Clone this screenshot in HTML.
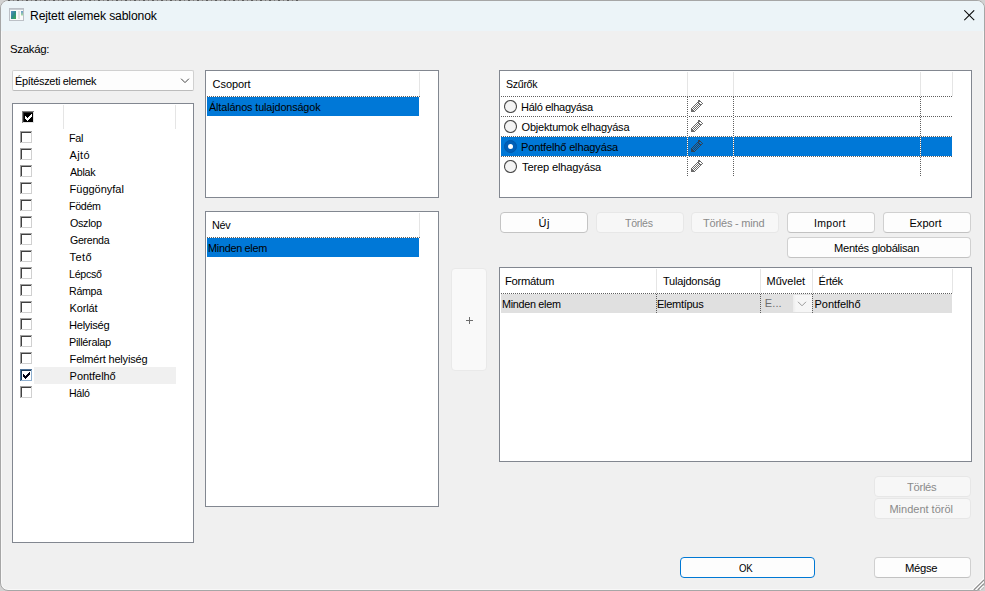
<!DOCTYPE html>
<html>
<head>
<meta charset="utf-8">
<title>Rejtett elemek sablonok</title>
<style>
html,body{margin:0;padding:0;}
body{width:985px;height:591px;overflow:hidden;background:#d2d2d2;font-family:"Liberation Sans",sans-serif;font-size:11px;color:#000;position:relative;}
*{box-sizing:border-box;}
.abs{position:absolute;}
#win{position:absolute;left:0;top:0;width:985px;height:591px;background:#f0f0f0;border:1px solid #a6a6a6;border-radius:8px;overflow:hidden;box-shadow:inset 0 0 0 1px rgba(255,255,255,0.55);}
#tbar{position:absolute;left:0;top:0;width:983px;height:30px;background:#ecf4f8;}
.t{position:absolute;white-space:nowrap;line-height:14px;height:14px;transform-origin:0 0;}
.lb{position:absolute;background:#fff;border:1px solid #828790;}
.btn{position:absolute;background:#fdfdfd;border:1px solid #d0d0d0;border-bottom-color:#c2c2c2;border-radius:4px;}
.btn.dis{background:#f7f7f7;border-color:#e7e7e7;}
.cb{position:absolute;left:20px;width:13px;height:13px;background:#fff;border-top:1px solid #8a8a8a;border-left:1px solid #8a8a8a;border-right:1px solid #e3e3e3;border-bottom:1px solid #e3e3e3;}
.cb i{position:absolute;left:0;top:0;width:11px;height:11px;border-top:1px solid #4a4a4a;border-left:1px solid #4a4a4a;border-right:1px solid #f4f4f4;border-bottom:1px solid #f4f4f4;}
.hs{position:absolute;width:1px;background:#e5e5e5;}
.dv{position:absolute;width:1px;background:#fff linear-gradient(to bottom,#5f5f5f 50%,rgba(255,255,255,0) 50%) 0 0/1px 2px repeat-y;}
.dh{position:absolute;height:1px;background:#fff linear-gradient(to right,#5f5f5f 50%,rgba(255,255,255,0) 50%) 0 0/2px 1px repeat-x;}
</style>
</head>
<body>
<div id="win">
<div id="tbar"></div>
</div>

<div class="abs" style="left:8px;top:0;width:292px;height:1px;background:repeating-linear-gradient(to right,#5a5a5a 0 2px,rgba(0,0,0,0) 2px 5px,#777 5px 6px,rgba(0,0,0,0) 6px 9px);"></div>
<!-- title icon -->
<svg class="abs" style="left:9px;top:8px" width="15" height="13" viewBox="0 0 15 13">
<defs><linearGradient id="g1" x1="0" y1="0" x2="1" y2="1"><stop offset="0" stop-color="#5b8ec8"/><stop offset="0.5" stop-color="#2f8b8b"/><stop offset="1" stop-color="#41ab4c"/></linearGradient>
<linearGradient id="g2" x1="0" y1="0" x2="0" y2="1"><stop offset="0" stop-color="#6a98cc"/><stop offset="1" stop-color="#a4dfa0"/></linearGradient></defs>
<rect x="0.5" y="0.5" width="14" height="12" fill="#fafafa" stroke="#bcc0c6"/>
<rect x="1" y="1" width="13" height="1" fill="#c9cdd2"/>
<rect x="2" y="3" width="5" height="8" fill="url(#g1)"/>
<rect x="9" y="3" width="2" height="8" fill="#e3e3e3"/>
<rect x="12" y="3" width="2" height="4.5" fill="url(#g2)"/>
</svg>
<!-- close X -->
<svg class="abs" style="left:964px;top:10px" width="11" height="11" viewBox="0 0 11 11"><path d="M0.3 0.3 L10.2 10.2 M10.2 0.3 L0.3 10.2" stroke="#0a0a0a" stroke-width="1.05" fill="none"/></svg>

<!-- combo -->
<div class="abs" style="left:12px;top:70px;width:182px;height:21px;background:#fdfdfd;border:1px solid #d0d0d0;border-bottom-color:#bcbcbc;border-radius:2px;"></div>
<svg class="abs" style="left:180px;top:77px" width="10" height="7" viewBox="0 0 10 7"><path d="M1.1 1.7 L5 5.6 L8.9 1.7" stroke="#444" stroke-width="1" fill="none"/></svg>

<!-- left list -->
<div class="lb" style="left:12px;top:103px;width:182px;height:440px;"></div>
<div class="hs" style="left:63px;top:105px;height:24px;"></div>
<div class="hs" style="left:175px;top:105px;height:24px;"></div>
<div class="abs" style="left:34px;top:367px;width:142px;height:17px;background:#f0f0f0;"></div>

<!-- Csoport -->
<div class="lb" style="left:205px;top:70px;width:234px;height:128px;"></div>
<div class="hs" style="left:419px;top:72px;height:24px;"></div>
<div class="dh" style="left:207px;top:96px;width:213px;"></div>
<div class="abs" style="left:207px;top:97px;width:212px;height:19px;background:#0078d7;"></div>

<!-- Nev -->
<div class="lb" style="left:205px;top:211px;width:234px;height:296px;"></div>
<div class="hs" style="left:419px;top:213px;height:24px;"></div>
<div class="dh" style="left:207px;top:237px;width:213px;"></div>
<div class="abs" style="left:207px;top:238px;width:212px;height:19px;background:#0078d7;"></div>

<!-- plus -->
<div class="abs" style="left:451px;top:268px;width:36px;height:103px;background:#f9f9f9;border:1px solid #e9e9e9;border-radius:4px;"></div>
<svg class="abs" style="left:466px;top:317px" width="7" height="7" viewBox="0 0 7 7"><path d="M3.5 0 V7 M0 3.5 H7" stroke="#6e6e6e" stroke-width="1" fill="none"/></svg>

<!-- filters list -->
<div class="lb" style="left:499px;top:70px;width:473px;height:128px;"></div>
<div class="abs" style="left:501px;top:137px;width:451px;height:19px;background:#0078d7;"></div>
<div class="hs" style="left:687px;top:72px;height:24px;"></div>
<div class="hs" style="left:733px;top:72px;height:24px;"></div>
<div class="hs" style="left:920px;top:72px;height:24px;"></div>
<div class="hs" style="left:952px;top:72px;height:24px;"></div>
<div class="dh" style="left:501px;top:96px;width:451px;"></div>
<div class="dh" style="left:501px;top:116px;width:451px;"></div>
<div class="dh" style="left:501px;top:136px;width:451px;"></div>
<div class="dh" style="left:501px;top:156px;width:451px;"></div>
<div class="dv" style="left:687px;top:97px;height:79px;"></div>
<div class="dv" style="left:733px;top:97px;height:79px;"></div>
<div class="dv" style="left:920px;top:97px;height:79px;"></div>

<!-- buttons -->
<div class="btn" style="left:500px;top:212px;width:88px;height:21px;border-color:#c4c4c4;"></div>
<div class="btn dis" style="left:596px;top:212px;width:88px;height:21px;"></div>
<div class="btn dis" style="left:691px;top:212px;width:88px;height:21px;"></div>
<div class="btn" style="left:787px;top:212px;width:88px;height:21px;"></div>
<div class="btn" style="left:883px;top:212px;width:88px;height:21px;"></div>
<div class="btn" style="left:787px;top:237px;width:184px;height:21px;"></div>

<!-- bottom table -->
<div class="lb" style="left:499px;top:267px;width:473px;height:195px;"></div>
<div class="abs" style="left:501px;top:294px;width:451px;height:19px;background:#e0e0e0;"></div>
<div class="abs" style="left:793px;top:295px;width:19px;height:17px;background:linear-gradient(to right,#ececec,#f6f6f6 3px);"></div>
<div class="hs" style="left:656px;top:269px;height:24px;"></div>
<div class="hs" style="left:760px;top:269px;height:24px;"></div>
<div class="hs" style="left:812px;top:269px;height:24px;"></div>
<div class="hs" style="left:952px;top:269px;height:24px;"></div>
<div class="dh" style="left:501px;top:293px;width:451px;"></div>
<div class="dv" style="left:656px;top:294px;height:19px;background-color:transparent;"></div>
<div class="dv" style="left:760px;top:294px;height:19px;background-color:transparent;"></div>
<div class="dv" style="left:812px;top:294px;height:19px;background-color:transparent;"></div>
<svg class="abs" style="left:797px;top:301px" width="10" height="6" viewBox="0 0 10 6"><path d="M1 0.8 L5 4.8 L9 0.8" stroke="#9a9a9a" stroke-width="1" fill="none"/></svg>

<div class="btn dis" style="left:874px;top:476px;width:97px;height:21px;"></div>
<div class="btn dis" style="left:874px;top:498px;width:97px;height:21px;"></div>
<div class="btn" style="left:680px;top:557px;width:135px;height:21px;border-color:#0078d4;"></div>
<div class="btn" style="left:874px;top:557px;width:97px;height:21px;"></div>

<!-- resize grip -->
<svg class="abs" style="left:970px;top:576px" width="14" height="14" viewBox="0 0 14 14">
<path d="M2.3 14 L14 2.3 M6 14 L14 6 M9.9 14 L14 9.9" stroke="#ffffff" stroke-width="1.2" fill="none"/>
<path d="M3.8 14 L14 3.8 M7.7 14 L14 7.7" stroke="#8e8e8e" stroke-width="1.2" fill="none"/>
<path d="M11.2 14 L14 11.2" stroke="#c0c0c0" stroke-width="1.2" fill="none"/>
</svg>

<svg class="abs" style="left:22px;top:111px" width="13" height="13" viewBox="0 0 13 13" shape-rendering="crispEdges"><rect x="0" y="0" width="13" height="13" fill="#ffffff"/><rect x="0" y="0" width="12" height="12" fill="#808080"/><rect x="1" y="1" width="11" height="11" fill="#e3e3e3"/><rect x="1" y="1" width="10" height="10" fill="#2a2a2a"/><rect x="2" y="2" width="9" height="9" fill="#000000"/><rect x="3" y="5" width="1" height="3" fill="#ffffff"/><rect x="4" y="6" width="1" height="3" fill="#ffffff"/><rect x="5" y="7" width="1" height="3" fill="#ffffff"/><rect x="6" y="6" width="1" height="3" fill="#ffffff"/><rect x="7" y="5" width="1" height="3" fill="#ffffff"/><rect x="8" y="4" width="1" height="3" fill="#ffffff"/><rect x="9" y="3" width="1" height="3" fill="#ffffff"/></svg>
<svg class="abs" style="left:20px;top:131px" width="13" height="13" viewBox="0 0 13 13" shape-rendering="crispEdges"><rect x="0" y="0" width="13" height="13" fill="#ffffff"/><rect x="0" y="0" width="12" height="12" fill="#a0a0a0"/><rect x="1" y="1" width="11" height="11" fill="#d0d0d0"/><rect x="1" y="1" width="10" height="10" fill="#404040"/><rect x="2" y="2" width="9" height="9" fill="#ffffff"/></svg>
<svg class="abs" style="left:20px;top:148px" width="13" height="13" viewBox="0 0 13 13" shape-rendering="crispEdges"><rect x="0" y="0" width="13" height="13" fill="#ffffff"/><rect x="0" y="0" width="12" height="12" fill="#a0a0a0"/><rect x="1" y="1" width="11" height="11" fill="#d0d0d0"/><rect x="1" y="1" width="10" height="10" fill="#404040"/><rect x="2" y="2" width="9" height="9" fill="#ffffff"/></svg>
<svg class="abs" style="left:20px;top:165px" width="13" height="13" viewBox="0 0 13 13" shape-rendering="crispEdges"><rect x="0" y="0" width="13" height="13" fill="#ffffff"/><rect x="0" y="0" width="12" height="12" fill="#a0a0a0"/><rect x="1" y="1" width="11" height="11" fill="#d0d0d0"/><rect x="1" y="1" width="10" height="10" fill="#404040"/><rect x="2" y="2" width="9" height="9" fill="#ffffff"/></svg>
<svg class="abs" style="left:20px;top:182px" width="13" height="13" viewBox="0 0 13 13" shape-rendering="crispEdges"><rect x="0" y="0" width="13" height="13" fill="#ffffff"/><rect x="0" y="0" width="12" height="12" fill="#a0a0a0"/><rect x="1" y="1" width="11" height="11" fill="#d0d0d0"/><rect x="1" y="1" width="10" height="10" fill="#404040"/><rect x="2" y="2" width="9" height="9" fill="#ffffff"/></svg>
<svg class="abs" style="left:20px;top:199px" width="13" height="13" viewBox="0 0 13 13" shape-rendering="crispEdges"><rect x="0" y="0" width="13" height="13" fill="#ffffff"/><rect x="0" y="0" width="12" height="12" fill="#a0a0a0"/><rect x="1" y="1" width="11" height="11" fill="#d0d0d0"/><rect x="1" y="1" width="10" height="10" fill="#404040"/><rect x="2" y="2" width="9" height="9" fill="#ffffff"/></svg>
<svg class="abs" style="left:20px;top:216px" width="13" height="13" viewBox="0 0 13 13" shape-rendering="crispEdges"><rect x="0" y="0" width="13" height="13" fill="#ffffff"/><rect x="0" y="0" width="12" height="12" fill="#a0a0a0"/><rect x="1" y="1" width="11" height="11" fill="#d0d0d0"/><rect x="1" y="1" width="10" height="10" fill="#404040"/><rect x="2" y="2" width="9" height="9" fill="#ffffff"/></svg>
<svg class="abs" style="left:20px;top:233px" width="13" height="13" viewBox="0 0 13 13" shape-rendering="crispEdges"><rect x="0" y="0" width="13" height="13" fill="#ffffff"/><rect x="0" y="0" width="12" height="12" fill="#a0a0a0"/><rect x="1" y="1" width="11" height="11" fill="#d0d0d0"/><rect x="1" y="1" width="10" height="10" fill="#404040"/><rect x="2" y="2" width="9" height="9" fill="#ffffff"/></svg>
<svg class="abs" style="left:20px;top:250px" width="13" height="13" viewBox="0 0 13 13" shape-rendering="crispEdges"><rect x="0" y="0" width="13" height="13" fill="#ffffff"/><rect x="0" y="0" width="12" height="12" fill="#a0a0a0"/><rect x="1" y="1" width="11" height="11" fill="#d0d0d0"/><rect x="1" y="1" width="10" height="10" fill="#404040"/><rect x="2" y="2" width="9" height="9" fill="#ffffff"/></svg>
<svg class="abs" style="left:20px;top:267px" width="13" height="13" viewBox="0 0 13 13" shape-rendering="crispEdges"><rect x="0" y="0" width="13" height="13" fill="#ffffff"/><rect x="0" y="0" width="12" height="12" fill="#a0a0a0"/><rect x="1" y="1" width="11" height="11" fill="#d0d0d0"/><rect x="1" y="1" width="10" height="10" fill="#404040"/><rect x="2" y="2" width="9" height="9" fill="#ffffff"/></svg>
<svg class="abs" style="left:20px;top:284px" width="13" height="13" viewBox="0 0 13 13" shape-rendering="crispEdges"><rect x="0" y="0" width="13" height="13" fill="#ffffff"/><rect x="0" y="0" width="12" height="12" fill="#a0a0a0"/><rect x="1" y="1" width="11" height="11" fill="#d0d0d0"/><rect x="1" y="1" width="10" height="10" fill="#404040"/><rect x="2" y="2" width="9" height="9" fill="#ffffff"/></svg>
<svg class="abs" style="left:20px;top:301px" width="13" height="13" viewBox="0 0 13 13" shape-rendering="crispEdges"><rect x="0" y="0" width="13" height="13" fill="#ffffff"/><rect x="0" y="0" width="12" height="12" fill="#a0a0a0"/><rect x="1" y="1" width="11" height="11" fill="#d0d0d0"/><rect x="1" y="1" width="10" height="10" fill="#404040"/><rect x="2" y="2" width="9" height="9" fill="#ffffff"/></svg>
<svg class="abs" style="left:20px;top:318px" width="13" height="13" viewBox="0 0 13 13" shape-rendering="crispEdges"><rect x="0" y="0" width="13" height="13" fill="#ffffff"/><rect x="0" y="0" width="12" height="12" fill="#a0a0a0"/><rect x="1" y="1" width="11" height="11" fill="#d0d0d0"/><rect x="1" y="1" width="10" height="10" fill="#404040"/><rect x="2" y="2" width="9" height="9" fill="#ffffff"/></svg>
<svg class="abs" style="left:20px;top:335px" width="13" height="13" viewBox="0 0 13 13" shape-rendering="crispEdges"><rect x="0" y="0" width="13" height="13" fill="#ffffff"/><rect x="0" y="0" width="12" height="12" fill="#a0a0a0"/><rect x="1" y="1" width="11" height="11" fill="#d0d0d0"/><rect x="1" y="1" width="10" height="10" fill="#404040"/><rect x="2" y="2" width="9" height="9" fill="#ffffff"/></svg>
<svg class="abs" style="left:20px;top:352px" width="13" height="13" viewBox="0 0 13 13" shape-rendering="crispEdges"><rect x="0" y="0" width="13" height="13" fill="#ffffff"/><rect x="0" y="0" width="12" height="12" fill="#a0a0a0"/><rect x="1" y="1" width="11" height="11" fill="#d0d0d0"/><rect x="1" y="1" width="10" height="10" fill="#404040"/><rect x="2" y="2" width="9" height="9" fill="#ffffff"/></svg>
<svg class="abs" style="left:20px;top:369px" width="13" height="13" viewBox="0 0 13 13" shape-rendering="crispEdges"><rect x="0" y="0" width="13" height="13" fill="#ffffff"/><rect x="0" y="0" width="12" height="12" fill="#4a7097"/><rect x="1" y="1" width="11" height="11" fill="#8fb0d0"/><rect x="1" y="1" width="10" height="10" fill="#1c3a57"/><rect x="2" y="2" width="9" height="9" fill="#ffffff"/><rect x="3" y="5" width="1" height="3" fill="#000010"/><rect x="4" y="6" width="1" height="3" fill="#000010"/><rect x="5" y="7" width="1" height="3" fill="#000010"/><rect x="6" y="6" width="1" height="3" fill="#000010"/><rect x="7" y="5" width="1" height="3" fill="#000010"/><rect x="8" y="4" width="1" height="3" fill="#000010"/><rect x="9" y="3" width="1" height="3" fill="#000010"/></svg>
<svg class="abs" style="left:20px;top:386px" width="13" height="13" viewBox="0 0 13 13" shape-rendering="crispEdges"><rect x="0" y="0" width="13" height="13" fill="#ffffff"/><rect x="0" y="0" width="12" height="12" fill="#a0a0a0"/><rect x="1" y="1" width="11" height="11" fill="#d0d0d0"/><rect x="1" y="1" width="10" height="10" fill="#404040"/><rect x="2" y="2" width="9" height="9" fill="#ffffff"/></svg>
<svg class="abs" style="left:504px;top:100px" width="13" height="13" viewBox="0 0 13 13"><circle cx="6.5" cy="6.5" r="6" fill="#f4f4f4" stroke="#4c4c4c" stroke-width="1.1"/></svg>
<svg class="abs" style="left:691px;top:100px" width="12" height="12" viewBox="0 0 12 12" shape-rendering="crispEdges"><defs><pattern id="pp0" width="2" height="2" patternUnits="userSpaceOnUse"><rect x="0" y="0" width="1" height="1" fill="#6c6c6c"/><rect x="1" y="1" width="1" height="1" fill="#6c6c6c"/></pattern></defs><rect x="7" y="0" width="2" height="1" fill="#ffffff"/><rect x="7" y="0" width="2" height="1" fill="url(#pp0)"/><rect x="6" y="1" width="4" height="1" fill="#ffffff"/><rect x="6" y="1" width="4" height="1" fill="url(#pp0)"/><rect x="5" y="2" width="6" height="1" fill="#ffffff"/><rect x="5" y="2" width="6" height="1" fill="url(#pp0)"/><rect x="4" y="3" width="8" height="1" fill="#ffffff"/><rect x="4" y="3" width="8" height="1" fill="url(#pp0)"/><rect x="3" y="4" width="8" height="1" fill="#ffffff"/><rect x="3" y="4" width="8" height="1" fill="url(#pp0)"/><rect x="2" y="5" width="8" height="1" fill="#ffffff"/><rect x="2" y="5" width="8" height="1" fill="url(#pp0)"/><rect x="1" y="6" width="8" height="1" fill="#ffffff"/><rect x="1" y="6" width="8" height="1" fill="url(#pp0)"/><rect x="0" y="7" width="8" height="1" fill="#ffffff"/><rect x="0" y="7" width="8" height="1" fill="url(#pp0)"/><rect x="0" y="8" width="7" height="1" fill="#ffffff"/><rect x="0" y="8" width="7" height="1" fill="url(#pp0)"/><rect x="0" y="9" width="6" height="1" fill="#ffffff"/><rect x="0" y="9" width="6" height="1" fill="url(#pp0)"/><rect x="0" y="10" width="5" height="1" fill="#ffffff"/><rect x="0" y="10" width="5" height="1" fill="url(#pp0)"/><rect x="0" y="11" width="4" height="1" fill="#ffffff"/><rect x="0" y="11" width="4" height="1" fill="url(#pp0)"/><rect x="7" y="0" width="2" height="1" fill="#6c6c6c"/><rect x="7" y="1" width="3" height="1" fill="#6c6c6c"/><rect x="7" y="2" width="4" height="1" fill="#6c6c6c"/><rect x="8" y="3" width="4" height="1" fill="#6c6c6c"/><rect x="9" y="4" width="2" height="1" fill="#6c6c6c"/><rect x="8" y="2" width="2" height="1" fill="#ffffff"/><rect x="9" y="3" width="2" height="1" fill="#ffffff"/><rect x="0" y="10" width="2" height="2" fill="#6c6c6c"/><rect x="0" y="8" width="1" height="4" fill="#6c6c6c"/><rect x="0" y="11" width="4" height="1" fill="#6c6c6c"/></svg>
<svg class="abs" style="left:504px;top:120px" width="13" height="13" viewBox="0 0 13 13"><circle cx="6.5" cy="6.5" r="6" fill="#f4f4f4" stroke="#4c4c4c" stroke-width="1.1"/></svg>
<svg class="abs" style="left:691px;top:120px" width="12" height="12" viewBox="0 0 12 12" shape-rendering="crispEdges"><defs><pattern id="pp1" width="2" height="2" patternUnits="userSpaceOnUse"><rect x="0" y="0" width="1" height="1" fill="#6c6c6c"/><rect x="1" y="1" width="1" height="1" fill="#6c6c6c"/></pattern></defs><rect x="7" y="0" width="2" height="1" fill="#ffffff"/><rect x="7" y="0" width="2" height="1" fill="url(#pp1)"/><rect x="6" y="1" width="4" height="1" fill="#ffffff"/><rect x="6" y="1" width="4" height="1" fill="url(#pp1)"/><rect x="5" y="2" width="6" height="1" fill="#ffffff"/><rect x="5" y="2" width="6" height="1" fill="url(#pp1)"/><rect x="4" y="3" width="8" height="1" fill="#ffffff"/><rect x="4" y="3" width="8" height="1" fill="url(#pp1)"/><rect x="3" y="4" width="8" height="1" fill="#ffffff"/><rect x="3" y="4" width="8" height="1" fill="url(#pp1)"/><rect x="2" y="5" width="8" height="1" fill="#ffffff"/><rect x="2" y="5" width="8" height="1" fill="url(#pp1)"/><rect x="1" y="6" width="8" height="1" fill="#ffffff"/><rect x="1" y="6" width="8" height="1" fill="url(#pp1)"/><rect x="0" y="7" width="8" height="1" fill="#ffffff"/><rect x="0" y="7" width="8" height="1" fill="url(#pp1)"/><rect x="0" y="8" width="7" height="1" fill="#ffffff"/><rect x="0" y="8" width="7" height="1" fill="url(#pp1)"/><rect x="0" y="9" width="6" height="1" fill="#ffffff"/><rect x="0" y="9" width="6" height="1" fill="url(#pp1)"/><rect x="0" y="10" width="5" height="1" fill="#ffffff"/><rect x="0" y="10" width="5" height="1" fill="url(#pp1)"/><rect x="0" y="11" width="4" height="1" fill="#ffffff"/><rect x="0" y="11" width="4" height="1" fill="url(#pp1)"/><rect x="7" y="0" width="2" height="1" fill="#6c6c6c"/><rect x="7" y="1" width="3" height="1" fill="#6c6c6c"/><rect x="7" y="2" width="4" height="1" fill="#6c6c6c"/><rect x="8" y="3" width="4" height="1" fill="#6c6c6c"/><rect x="9" y="4" width="2" height="1" fill="#6c6c6c"/><rect x="8" y="2" width="2" height="1" fill="#ffffff"/><rect x="9" y="3" width="2" height="1" fill="#ffffff"/><rect x="0" y="10" width="2" height="2" fill="#6c6c6c"/><rect x="0" y="8" width="1" height="4" fill="#6c6c6c"/><rect x="0" y="11" width="4" height="1" fill="#6c6c6c"/></svg>
<svg class="abs" style="left:504px;top:140px" width="13" height="13" viewBox="0 0 13 13"><circle cx="6.5" cy="6.5" r="6" fill="#005fb8" stroke="#0058aa" stroke-width="1"/><circle cx="6.5" cy="6.5" r="2.5" fill="#fff"/></svg>
<svg class="abs" style="left:691px;top:140px" width="12" height="12" viewBox="0 0 12 12" shape-rendering="crispEdges"><defs><pattern id="pp2" width="2" height="2" patternUnits="userSpaceOnUse"><rect x="0" y="0" width="1" height="1" fill="#2e4256"/><rect x="1" y="1" width="1" height="1" fill="#2e4256"/></pattern></defs><rect x="7" y="0" width="2" height="1" fill="#0078d7"/><rect x="7" y="0" width="2" height="1" fill="url(#pp2)"/><rect x="6" y="1" width="4" height="1" fill="#0078d7"/><rect x="6" y="1" width="4" height="1" fill="url(#pp2)"/><rect x="5" y="2" width="6" height="1" fill="#0078d7"/><rect x="5" y="2" width="6" height="1" fill="url(#pp2)"/><rect x="4" y="3" width="8" height="1" fill="#0078d7"/><rect x="4" y="3" width="8" height="1" fill="url(#pp2)"/><rect x="3" y="4" width="8" height="1" fill="#0078d7"/><rect x="3" y="4" width="8" height="1" fill="url(#pp2)"/><rect x="2" y="5" width="8" height="1" fill="#0078d7"/><rect x="2" y="5" width="8" height="1" fill="url(#pp2)"/><rect x="1" y="6" width="8" height="1" fill="#0078d7"/><rect x="1" y="6" width="8" height="1" fill="url(#pp2)"/><rect x="0" y="7" width="8" height="1" fill="#0078d7"/><rect x="0" y="7" width="8" height="1" fill="url(#pp2)"/><rect x="0" y="8" width="7" height="1" fill="#0078d7"/><rect x="0" y="8" width="7" height="1" fill="url(#pp2)"/><rect x="0" y="9" width="6" height="1" fill="#0078d7"/><rect x="0" y="9" width="6" height="1" fill="url(#pp2)"/><rect x="0" y="10" width="5" height="1" fill="#0078d7"/><rect x="0" y="10" width="5" height="1" fill="url(#pp2)"/><rect x="0" y="11" width="4" height="1" fill="#0078d7"/><rect x="0" y="11" width="4" height="1" fill="url(#pp2)"/><rect x="7" y="0" width="2" height="1" fill="#2e4256"/><rect x="7" y="1" width="3" height="1" fill="#2e4256"/><rect x="7" y="2" width="4" height="1" fill="#2e4256"/><rect x="8" y="3" width="4" height="1" fill="#2e4256"/><rect x="9" y="4" width="2" height="1" fill="#2e4256"/><rect x="8" y="2" width="2" height="1" fill="#0078d7"/><rect x="9" y="3" width="2" height="1" fill="#0078d7"/><rect x="0" y="10" width="2" height="2" fill="#2e4256"/><rect x="0" y="8" width="1" height="4" fill="#2e4256"/><rect x="0" y="11" width="4" height="1" fill="#2e4256"/></svg>
<svg class="abs" style="left:504px;top:160px" width="13" height="13" viewBox="0 0 13 13"><circle cx="6.5" cy="6.5" r="6" fill="#f4f4f4" stroke="#4c4c4c" stroke-width="1.1"/></svg>
<svg class="abs" style="left:691px;top:160px" width="12" height="12" viewBox="0 0 12 12" shape-rendering="crispEdges"><defs><pattern id="pp3" width="2" height="2" patternUnits="userSpaceOnUse"><rect x="0" y="0" width="1" height="1" fill="#6c6c6c"/><rect x="1" y="1" width="1" height="1" fill="#6c6c6c"/></pattern></defs><rect x="7" y="0" width="2" height="1" fill="#ffffff"/><rect x="7" y="0" width="2" height="1" fill="url(#pp3)"/><rect x="6" y="1" width="4" height="1" fill="#ffffff"/><rect x="6" y="1" width="4" height="1" fill="url(#pp3)"/><rect x="5" y="2" width="6" height="1" fill="#ffffff"/><rect x="5" y="2" width="6" height="1" fill="url(#pp3)"/><rect x="4" y="3" width="8" height="1" fill="#ffffff"/><rect x="4" y="3" width="8" height="1" fill="url(#pp3)"/><rect x="3" y="4" width="8" height="1" fill="#ffffff"/><rect x="3" y="4" width="8" height="1" fill="url(#pp3)"/><rect x="2" y="5" width="8" height="1" fill="#ffffff"/><rect x="2" y="5" width="8" height="1" fill="url(#pp3)"/><rect x="1" y="6" width="8" height="1" fill="#ffffff"/><rect x="1" y="6" width="8" height="1" fill="url(#pp3)"/><rect x="0" y="7" width="8" height="1" fill="#ffffff"/><rect x="0" y="7" width="8" height="1" fill="url(#pp3)"/><rect x="0" y="8" width="7" height="1" fill="#ffffff"/><rect x="0" y="8" width="7" height="1" fill="url(#pp3)"/><rect x="0" y="9" width="6" height="1" fill="#ffffff"/><rect x="0" y="9" width="6" height="1" fill="url(#pp3)"/><rect x="0" y="10" width="5" height="1" fill="#ffffff"/><rect x="0" y="10" width="5" height="1" fill="url(#pp3)"/><rect x="0" y="11" width="4" height="1" fill="#ffffff"/><rect x="0" y="11" width="4" height="1" fill="url(#pp3)"/><rect x="7" y="0" width="2" height="1" fill="#6c6c6c"/><rect x="7" y="1" width="3" height="1" fill="#6c6c6c"/><rect x="7" y="2" width="4" height="1" fill="#6c6c6c"/><rect x="8" y="3" width="4" height="1" fill="#6c6c6c"/><rect x="9" y="4" width="2" height="1" fill="#6c6c6c"/><rect x="8" y="2" width="2" height="1" fill="#ffffff"/><rect x="9" y="3" width="2" height="1" fill="#ffffff"/><rect x="0" y="10" width="2" height="2" fill="#6c6c6c"/><rect x="0" y="8" width="1" height="4" fill="#6c6c6c"/><rect x="0" y="11" width="4" height="1" fill="#6c6c6c"/></svg>
<div class="t" style="left:29.80px;top:7.84px;letter-spacing:-0.130px;transform:scaleX(1.0137);font-size:12px;line-height:16px;height:16px;">Rejtett elemek sablonok</div>
<div class="t" style="left:10.40px;top:42.19px;letter-spacing:-0.300px;transform:scaleX(1.0392);">Szakág:</div>
<div class="t" style="left:14.60px;top:74.19px;letter-spacing:-0.300px;transform:scaleX(0.9937);">Építészeti elemek</div>
<div class="t" style="left:68.60px;top:131.19px;letter-spacing:-0.300px;transform:scaleX(0.9834);">Fal</div>
<div class="t" style="left:69.60px;top:148.19px;letter-spacing:0.321px;">Ajtó</div>
<div class="t" style="left:69.60px;top:165.19px;letter-spacing:-0.300px;transform:scaleX(0.9696);">Ablak</div>
<div class="t" style="left:69.60px;top:182.19px;letter-spacing:-0.020px;">Függönyfal</div>
<div class="t" style="left:68.60px;top:199.19px;letter-spacing:-0.300px;transform:scaleX(0.9674);">Födém</div>
<div class="t" style="left:69.60px;top:216.19px;letter-spacing:-0.300px;transform:scaleX(0.9749);">Oszlop</div>
<div class="t" style="left:69.60px;top:233.19px;letter-spacing:-0.300px;transform:scaleX(0.9644);">Gerenda</div>
<div class="t" style="left:69.60px;top:250.19px;letter-spacing:0.442px;">Tető</div>
<div class="t" style="left:68.60px;top:267.19px;letter-spacing:-0.300px;transform:scaleX(0.9689);">Lépcső</div>
<div class="t" style="left:68.60px;top:284.19px;letter-spacing:-0.300px;transform:scaleX(0.9665);">Rámpa</div>
<div class="t" style="left:69.60px;top:301.19px;letter-spacing:-0.176px;">Korlát</div>
<div class="t" style="left:68.60px;top:318.19px;letter-spacing:-0.300px;transform:scaleX(1.0143);">Helyiség</div>
<div class="t" style="left:68.60px;top:335.19px;letter-spacing:-0.300px;transform:scaleX(0.9899);">Pilléralap</div>
<div class="t" style="left:69.60px;top:352.19px;letter-spacing:-0.185px;">Felmért helyiség</div>
<div class="t" style="left:69.60px;top:369.19px;letter-spacing:-0.045px;">Pontfelhő</div>
<div class="t" style="left:68.60px;top:386.19px;letter-spacing:-0.300px;transform:scaleX(0.9627);">Háló</div>
<div class="t" style="left:212.60px;top:77.19px;letter-spacing:-0.077px;">Csoport</div>
<div class="t" style="left:208.60px;top:100.19px;letter-spacing:-0.150px;transform:scaleX(0.9886);">Általános tulajdonságok</div>
<div class="t" style="left:211.60px;top:218.19px;letter-spacing:-0.300px;transform:scaleX(0.9844);">Név</div>
<div class="t" style="left:207.60px;top:241.19px;letter-spacing:-0.300px;transform:scaleX(0.9884);">Minden elem</div>
<div class="t" style="left:506.40px;top:77.19px;letter-spacing:-0.300px;transform:scaleX(0.9628);">Szűrők</div>
<div class="t" style="left:520.60px;top:100.19px;letter-spacing:-0.300px;transform:scaleX(1.0042);">Háló elhagyása</div>
<div class="t" style="left:521.60px;top:120.19px;letter-spacing:-0.209px;">Objektumok elhagyása</div>
<div class="t" style="left:520.60px;top:140.19px;letter-spacing:-0.176px;transform:scaleX(1.0073);">Pontfelhő elhagyása</div>
<div class="t" style="left:521.60px;top:160.19px;letter-spacing:-0.157px;transform:scaleX(1.0090);">Terep elhagyása</div>
<div class="t" style="left:505.40px;top:274.19px;letter-spacing:-0.279px;transform:scaleX(1.0234);">Formátum</div>
<div class="t" style="left:663.00px;top:274.19px;letter-spacing:-0.200px;">Tulajdonság</div>
<div class="t" style="left:766.60px;top:274.19px;letter-spacing:-0.010px;">Művelet</div>
<div class="t" style="left:818.60px;top:274.19px;letter-spacing:-0.293px;">Érték</div>
<div class="t" style="left:502.00px;top:297.19px;letter-spacing:-0.300px;transform:scaleX(0.9816);">Minden elem</div>
<div class="t" style="left:657.40px;top:297.19px;letter-spacing:-0.300px;transform:scaleX(1.0040);">Elemtípus</div>
<div class="t" style="left:764.80px;top:296.19px;letter-spacing:0.117px;color:#6e6e6e;">E...</div>
<div class="t" style="left:814.60px;top:297.19px;letter-spacing:-0.070px;">Pontfelhő</div>
<div class="t" style="left:538.60px;top:216.19px;letter-spacing:0.456px;">Új</div>
<div class="t" style="left:625.00px;top:216.19px;letter-spacing:-0.300px;transform:scaleX(0.9607);color:#8a8a8a;">Törlés</div>
<div class="t" style="left:703.00px;top:216.19px;letter-spacing:-0.222px;color:#8a8a8a;">Törlés - mind</div>
<div class="t" style="left:813.65px;top:216.19px;letter-spacing:0.376px;transform:scaleX(0.9485);">Import</div>
<div class="t" style="left:909.40px;top:216.19px;letter-spacing:0.093px;">Export</div>
<div class="t" style="left:834.40px;top:241.19px;letter-spacing:-0.247px;transform:scaleX(1.0083);">Mentés globálisan</div>
<div class="t" style="left:907.40px;top:480.19px;letter-spacing:-0.300px;transform:scaleX(1.0195);color:#8a8a8a;">Törlés</div>
<div class="t" style="left:889.40px;top:502.19px;letter-spacing:0.005px;color:#8a8a8a;">Mindent töröl</div>
<div class="t" style="left:739.40px;top:561.19px;letter-spacing:-0.300px;transform:scaleX(0.8735);">OK</div>
<div class="t" style="left:905.40px;top:561.19px;letter-spacing:-0.300px;transform:scaleX(1.0219);">Mégse</div>
</body>
</html>
